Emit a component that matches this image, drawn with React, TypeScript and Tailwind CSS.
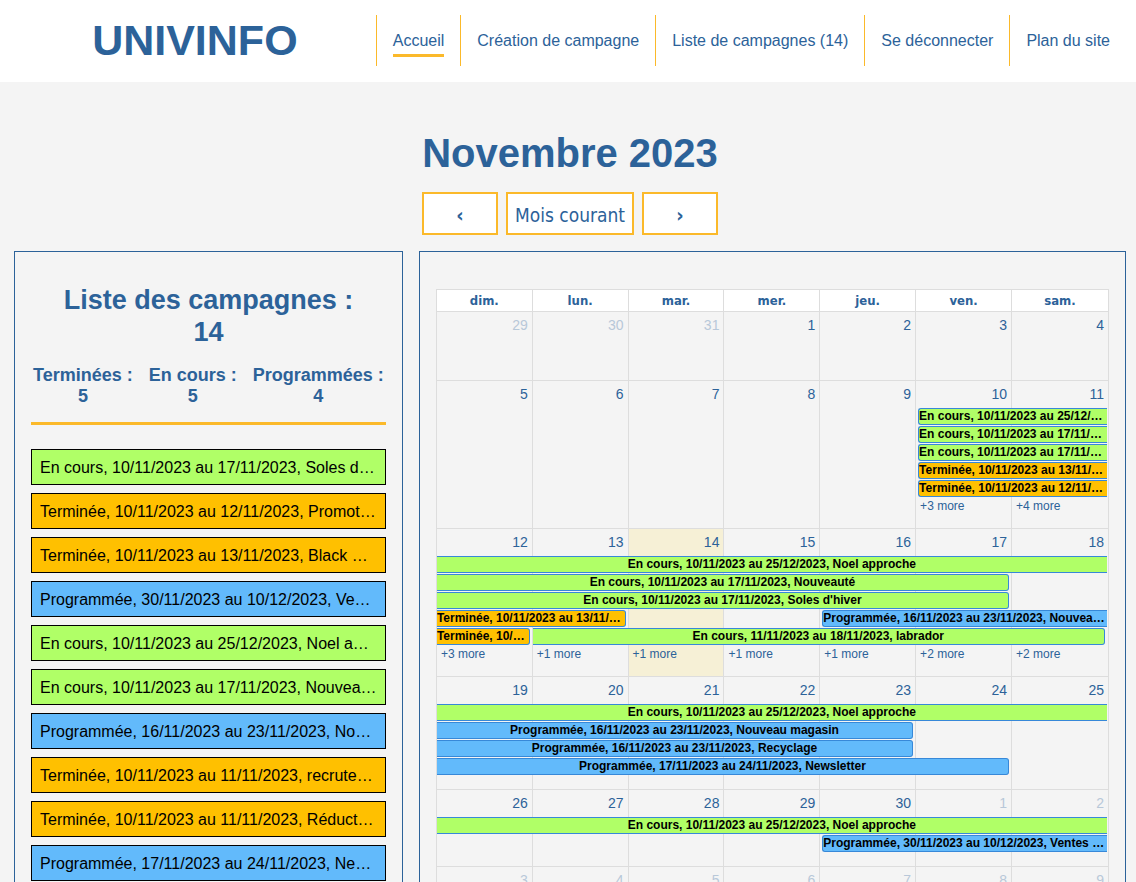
type Status = "done" | "running" | "planned";

type Campaign = { status: Status; start: string; end: string; name: string };

const campaigns = {
  soles: { status: "running", start: "10/11/2023", end: "17/11/2023", name: "Soles d'hiver" },
  promo: { status: "done", start: "10/11/2023", end: "12/11/2023", name: "Promotion" },
  black: { status: "done", start: "10/11/2023", end: "13/11/2023", name: "Black Friday" },
  ventes: { status: "planned", start: "30/11/2023", end: "10/12/2023", name: "Ventes privées" },
  noel: { status: "running", start: "10/11/2023", end: "25/12/2023", name: "Noel approche" },
  nouveaute: { status: "running", start: "10/11/2023", end: "17/11/2023", name: "Nouveauté" },
  magasin: { status: "planned", start: "16/11/2023", end: "23/11/2023", name: "Nouveau magasin" },
  recrutement: { status: "done", start: "10/11/2023", end: "11/11/2023", name: "recrutement" },
  reduction: { status: "done", start: "10/11/2023", end: "11/11/2023", name: "Réduction" },
  newsletter: { status: "planned", start: "17/11/2023", end: "24/11/2023", name: "Newsletter" },
  recyclage: { status: "planned", start: "16/11/2023", end: "23/11/2023", name: "Recyclage" },
  labrador: { status: "running", start: "11/11/2023", end: "18/11/2023", name: "labrador" },
} satisfies Record<string, Campaign>;

const statusLabel: Record<Status, string> = {
  done: "Terminée",
  running: "En cours",
  planned: "Programmée",
};

const statusColor: Record<Status, string> = {
  done: "bg-[#ffc000]",
  running: "bg-[#b0ff67]",
  planned: "bg-[#62bafb]",
};

const label = (c: Campaign) => `${statusLabel[c.status]}, ${c.start} au ${c.end}, ${c.name}`;

type Bar = {
  campaign: Campaign;
  lane: number;
  col: number;
  span: number;
  isStart?: boolean;
  isEnd?: boolean;
};

type Week = {
  days: number[];
  height: string;
  bars: Bar[];
  more?: number[];
  isOther?: (col: number) => boolean;
  today?: number;
};

const c = campaigns;

const weeks: Week[] = [
  { days: [29, 30, 31, 1, 2, 3, 4], height: "h-[69px]", bars: [], isOther: (col) => col < 3 },
  {
    days: [5, 6, 7, 8, 9, 10, 11],
    height: "h-[148px]",
    bars: [
      { campaign: c.noel, lane: 0, col: 5, span: 2, isStart: true },
      { campaign: c.nouveaute, lane: 1, col: 5, span: 2, isStart: true },
      { campaign: c.soles, lane: 2, col: 5, span: 2, isStart: true },
      { campaign: c.black, lane: 3, col: 5, span: 2, isStart: true },
      { campaign: c.promo, lane: 4, col: 5, span: 2, isStart: true },
    ],
    more: [0, 0, 0, 0, 0, 3, 4],
  },
  {
    days: [12, 13, 14, 15, 16, 17, 18],
    height: "h-[148px]",
    today: 2,
    bars: [
      { campaign: c.noel, lane: 0, col: 0, span: 7 },
      { campaign: c.nouveaute, lane: 1, col: 0, span: 6, isEnd: true },
      { campaign: c.soles, lane: 2, col: 0, span: 6, isEnd: true },
      { campaign: c.black, lane: 3, col: 0, span: 2, isEnd: true },
      { campaign: c.magasin, lane: 3, col: 4, span: 3, isStart: true },
      { campaign: c.promo, lane: 4, col: 0, span: 1, isEnd: true },
      { campaign: c.labrador, lane: 4, col: 1, span: 6, isEnd: true },
    ],
    more: [3, 1, 1, 1, 1, 2, 2],
  },
  {
    days: [19, 20, 21, 22, 23, 24, 25],
    height: "h-[113px]",
    bars: [
      { campaign: c.noel, lane: 0, col: 0, span: 7 },
      { campaign: c.magasin, lane: 1, col: 0, span: 5, isEnd: true },
      { campaign: c.recyclage, lane: 2, col: 0, span: 5, isEnd: true },
      { campaign: c.newsletter, lane: 3, col: 0, span: 6, isEnd: true },
    ],
  },
  {
    days: [26, 27, 28, 29, 30, 1, 2],
    height: "h-[77px]",
    isOther: (col) => col > 4,
    bars: [
      { campaign: c.noel, lane: 0, col: 0, span: 7 },
      { campaign: c.ventes, lane: 1, col: 4, span: 3, isStart: true },
    ],
  },
  { days: [3, 4, 5, 6, 7, 8, 9], height: "h-[69px]", bars: [], isOther: () => true },
];

const dayNames = ["dim.", "lun.", "mar.", "mer.", "jeu.", "ven.", "sam."];

const navItems = [
  { text: "Accueil", active: true },
  { text: "Création de campagne" },
  { text: "Liste de campagnes (14)" },
  { text: "Se déconnecter" },
  { text: "Plan du site" },
];

const totals = [
  { text: "Terminées :", value: 5 },
  { text: "En cours :", value: 5 },
  { text: "Programmées :", value: 4 },
];

const listed: Campaign[] = [
  c.soles, c.promo, c.black, c.ventes, c.noel, c.nouveaute,
  c.magasin, c.recrutement, c.reduction, c.newsletter, c.recyclage, c.labrador,
];

function Header() {
  return (
    <header className="flex items-center bg-white pt-[15px] pr-[10px] pb-4 pl-[14px]">
      <div className="flex-1 text-center text-[43px] leading-[51px] font-bold">UNIVINFO</div>
      <nav>
        <ul className="flex border-l border-[#fbb92a]">
          {navItems.map((item) => (
            <li
              key={item.text}
              className="flex h-[51px] items-center border-r border-[#fbb92a] px-4 last:border-r-0"
            >
              <a
                href="#"
                className={`border-y-[3px] border-t-transparent leading-[27px] ${
                  item.active ? "border-b-[#fbb92a]" : "border-b-transparent"
                }`}
              >
                {item.text}
              </a>
            </li>
          ))}
        </ul>
      </nav>
    </header>
  );
}

const buttonClass =
  "h-[43px] border-2 border-[#fbb92a] bg-white px-[7px] pt-[2px] font-['DejaVu_Sans_Condensed','DejaVu_Sans',sans-serif]";

function MonthPicker() {
  return (
    <div className="flex flex-col items-center">
      <h1 className="text-[40px] leading-[48px] font-bold">Novembre 2023</h1>
      <div className="mt-[15px] flex gap-2">
        <button
          type="button"
          aria-label="Mois précédent"
          className={`${buttonClass} w-[76px] text-[20px] leading-6 font-bold`}
        >
          ‹
        </button>
        <button type="button" className={`${buttonClass} text-[19px] leading-6`}>
          Mois courant
        </button>
        <button
          type="button"
          aria-label="Mois suivant"
          className={`${buttonClass} w-[76px] text-[20px] leading-6 font-bold`}
        >
          ›
        </button>
      </div>
    </div>
  );
}

function CampaignList() {
  return (
    <section className="min-w-0 border border-[#2c6299] px-4 pt-8 pb-4">
      <h2 className="text-center text-[27px] leading-8 font-bold">
        Liste des campagnes :<br />
        14
      </h2>
      <div className="mt-[17px] flex justify-center gap-4 border-b-[3px] border-[#fbb92a] pb-[15px] text-center text-[18px] leading-[21px] font-bold">
        {totals.map((t) => (
          <h3 key={t.text} className="whitespace-nowrap">
            {t.text}
            <br />
            {t.value}
          </h3>
        ))}
      </div>
      <ul className="mt-6 flex flex-col gap-2">
        {listed.map((item) => (
          <li key={item.name}>
            <a
              href="#"
              className={`block truncate border border-black px-2 pt-px leading-[33px] text-black ${statusColor[item.status]}`}
            >
              {label(item)}
            </a>
          </li>
        ))}
      </ul>
    </section>
  );
}

function EventBar({ bar }: { bar: Bar }) {
  return (
    <div
      className={`relative z-10 ${bar.isStart ? "pl-[2px]" : ""} ${bar.isEnd ? "pr-[2px]" : ""}`}
      style={{ width: `calc(${bar.span * 100}% + ${bar.span - 1}px)` }}
    >
      <a
        href="#"
        className={`block h-[17px] truncate border-y border-[#3788d8] text-center text-[12px] leading-[15px] font-bold text-black ${
          bar.isStart ? "rounded-l-[3px] border-l" : ""
        } ${bar.isEnd ? "rounded-r-[3px] border-r" : ""} ${statusColor[bar.campaign.status]}`}
      >
        {label(bar.campaign)}
      </a>
    </div>
  );
}

function DayCell({ week, col }: { week: Week; col: number }) {
  const lanes = week.bars.reduce((max, b) => Math.max(max, b.lane + 1), 0);
  const more = week.more?.[col];
  return (
    <td
      className={`border-r border-b border-[#dddddd] p-0 align-top ${week.height} ${
        week.today === col ? "bg-[#f6f0d6]" : ""
      }`}
    >
      <div
        className={`h-[27px] pr-1 text-right text-[14px] leading-[26px] ${
          week.isOther?.(col) ? "text-[#b8c8d9]" : ""
        }`}
      >
        {week.days[col]}
      </div>
      {Array.from({ length: lanes }, (_, lane) => {
        const bar = week.bars.find((b) => b.lane === lane && b.col === col);
        return (
          <div key={lane} className="h-[18px]">
            {bar && <EventBar bar={bar} />}
          </div>
        );
      })}
      {more ? (
        <button type="button" className="block pl-1 text-[12px] leading-4">
          +{more} more
        </button>
      ) : null}
    </td>
  );
}

function Calendar() {
  return (
    <section className="min-w-0 border border-[#2c6299] px-4 py-[37px]">
      <table className="w-full table-fixed border-separate border-spacing-0 border-t border-l border-[#dddddd]">
        <colgroup>
          {dayNames.map((d) => (
            <col key={d} className="last:w-[97px]" />
          ))}
        </colgroup>
        <thead>
          <tr>
            {dayNames.map((d) => (
              <th
                key={d}
                scope="col"
                className="h-[22px] border-r border-b border-[#dddddd] bg-white p-0 font-['DejaVu_Sans_Condensed','DejaVu_Sans',sans-serif] text-[13px] leading-[21px] font-bold"
              >
                {d}
              </th>
            ))}
          </tr>
        </thead>
        <tbody>
          {weeks.map((week, i) => (
            <tr key={i}>
              {week.days.map((_, col) => (
                <DayCell key={col} week={week} col={col} />
              ))}
            </tr>
          ))}
        </tbody>
      </table>
    </section>
  );
}

export default function App() {
  return (
    <div className="min-h-screen bg-[#f4f4f4] font-['Liberation_Sans',Arial,sans-serif] text-[16px] text-[#2c6299]">
      <Header />
      <main className="pt-[47px] pr-[10px] pb-4 pl-[14px]">
        <MonthPicker />
        <div className="mt-4 grid grid-cols-[11fr_20fr] gap-4">
          <CampaignList />
          <Calendar />
        </div>
      </main>
    </div>
  );
}
